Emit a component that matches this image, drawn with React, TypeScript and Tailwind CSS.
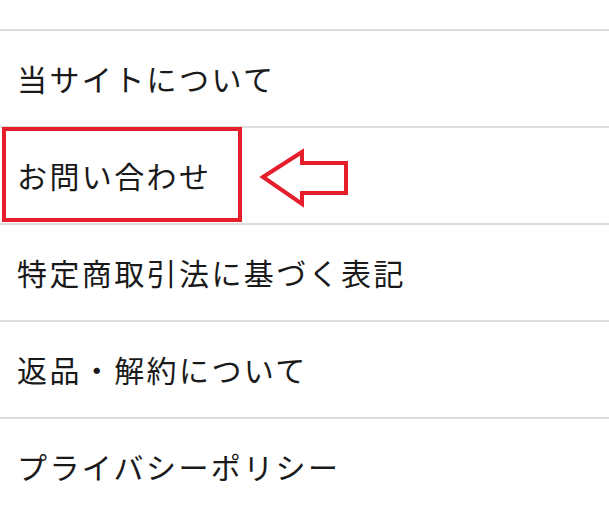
import React from 'react';

const items = [
  '当サイトについて',
  'お問い合わせ',
  '特定商取引法に基づく表記',
  '返品・解約について',
  'プライバシーポリシー',
];

export default function App() {
  return (
    <div
      className="relative w-[609px] h-[509px] overflow-hidden bg-white text-[#1a1a1a]"
      style={{ fontFamily: '"Noto Sans CJK JP", "Noto Sans", sans-serif' }}
    >
      <div className="h-[31px] border-b-2 border-[#dcdcdc]" />
      <ul>
        {items.map((label) => (
          <li
            key={label}
            className="h-[97px] border-b-2 border-[#dcdcdc] flex items-center pl-[17px] pb-[2px] text-[30px] tracking-[2.4px] leading-none font-normal"
          >
            {label}
          </li>
        ))}
      </ul>

      {/* highlight box */}
      <div className="absolute left-[2px] top-[127px] w-[240px] h-[95px] border-4 border-[#e41e2b]" />

      {/* arrow */}
      <svg
        className="absolute left-[258px] top-[148px]"
        width="94"
        height="64"
        viewBox="0 0 94 64"
      >
        <polygon
          points="5,29 44,4 44,15 88,15 88,45 44,45 44,56"
          fill="none"
          stroke="#e41e2b"
          strokeWidth="4"
          strokeLinejoin="miter"
        />
      </svg>
    </div>
  );
}
